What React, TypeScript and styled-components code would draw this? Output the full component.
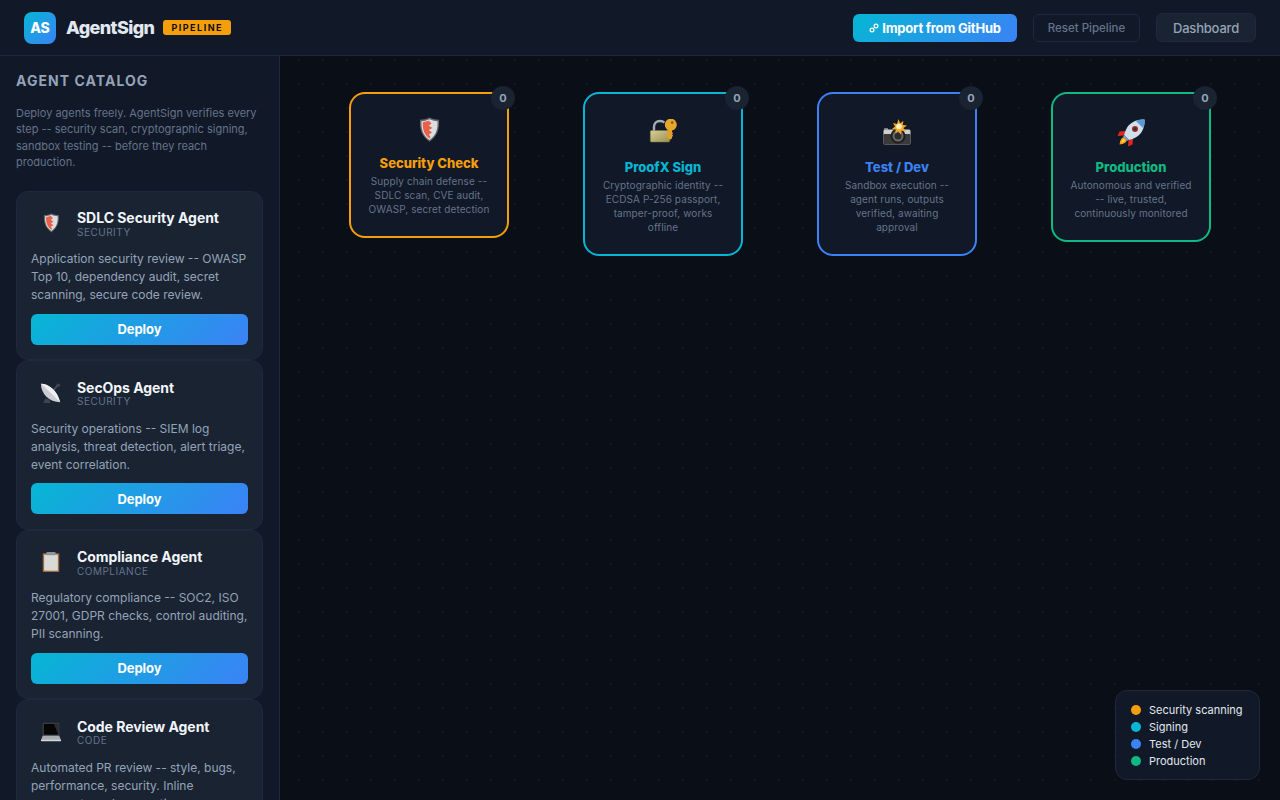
import * as React from "react";
import styled, { createGlobalStyle } from "styled-components";

const GlobalStyle = createGlobalStyle`
  html, body {
    margin: 0;
    height: 100%;
    overflow: hidden;
    background: #0a0e17;
    font-family: Inter, "Liberation Sans", sans-serif;
    -webkit-font-smoothing: antialiased;
  }
  #root {
    height: 100%;
  }
  * {
    box-sizing: border-box;
  }
`;

const Page = styled.div`
  height: 100vh;
  display: flex;
  flex-direction: column;
`;

const Header = styled.header`
  height: 56px;
  flex-shrink: 0;
  display: flex;
  align-items: center;
  justify-content: space-between;
  padding: 0 24px;
  background: #111827;
  border-bottom: 1px solid #1e293b;
`;

const Brand = styled.div`
  display: flex;
  align-items: center;
`;

const LogoMark = styled.div`
  width: 32px;
  height: 32px;
  border-radius: 8px;
  background: linear-gradient(135deg, #06b6d4, #3b82f6);
  color: #fff;
  font-size: 14px;
  font-weight: 800;
  display: flex;
  align-items: center;
  justify-content: center;
  margin-right: 10px;
`;

const BrandName = styled.span`
  font-size: 18px;
  font-weight: 800;
  color: #e2e8f0;
  letter-spacing: -0.6px;
  margin-right: 9px;
`;

const PipelineTag = styled.span`
  height: 15px;
  padding: 0 8px;
  border-radius: 3px;
  background: #f59e0b;
  color: #0a0e17;
  font-size: 9px;
  font-weight: 700;
  letter-spacing: 1.5px;
  line-height: 15px;
  margin-top: -1px;
`;

const Actions = styled.div`
  display: flex;
  align-items: center;
  gap: 16px;
`;

const ImportButton = styled.button`
  width: 164px;
  height: 28px;
  border: 0;
  border-radius: 6px;
  background: linear-gradient(135deg, #06b6d4, #3b82f6);
  color: #fff;
  font: 700 13px Inter, sans-serif;
  letter-spacing: -0.2px;
  display: flex;
  align-items: center;
  justify-content: center;
  gap: 3px;
  padding: 0;
`;

const ResetButton = styled.button`
  width: 107px;
  height: 28px;
  border: 1px solid #1e293b;
  border-radius: 6px;
  background: transparent;
  color: #64748b;
  font: 500 11.5px Inter, sans-serif;
  padding: 0;
`;

const DashboardButton = styled.button`
  width: 100px;
  height: 29px;
  border: 1px solid #1e293b;
  border-radius: 6px;
  background: #1a2332;
  color: #94a3b8;
  font: 500 13px Inter, sans-serif;
  letter-spacing: -0.2px;
  padding: 0;
`;

const Body = styled.div`
  flex: 1;
  min-height: 0;
  display: flex;
`;

const Sidebar = styled.aside`
  width: 280px;
  flex-shrink: 0;
  overflow: hidden;
  padding: 16px;
  background: #111827;
  border-right: 1px solid #1e293b;
`;

const SidebarTitle = styled.h2`
  margin: 0 0 15.9px;
  font-size: 14px;
  line-height: 17px;
  font-weight: 700;
  letter-spacing: 1.05px;
  color: #94a3b8;
`;

const SidebarIntro = styled.p`
  margin: 0 0 20.1px;
  font-size: 11px;
  line-height: 16.5px;
  color: #64748b;
`;

const AgentCard = styled.article`
  width: 247px;
  padding: 14px 14px 14.7px;
  background: #1a2332;
  border: 1px solid #1e293b;
  border-radius: 12px;
`;

const AgentHead = styled.div`
  height: 35.1px;
  display: flex;
  align-items: center;
  margin-bottom: 9.1px;
`;

const AgentIcon = styled.div`
  width: 40px;
  display: flex;
  justify-content: center;
  margin-right: 6px;
`;

const AgentName = styled.div`
  font-size: 14px;
  line-height: 17px;
  font-weight: 700;
  letter-spacing: -0.05px;
  color: #f1f5f9;
`;

const AgentCategory = styled.div`
  margin-top: -0.4px;
  font-size: 10px;
  line-height: 12px;
  letter-spacing: 0.5px;
  color: #64748b;
`;

const AgentText = styled.p`
  margin: 0 0 9.6px;
  font-size: 12px;
  line-height: 18px;
  color: #94a3b8;
`;

const DeployButton = styled.button`
  width: 100%;
  height: 31px;
  border: 0;
  border-radius: 6px;
  background: linear-gradient(135deg, #06b6d4, #3b82f6);
  color: #fff;
  font: 700 13px Inter, sans-serif;
  letter-spacing: -0.1px;
  padding: 0;
`;

const Canvas = styled.main`
  flex: 1;
  min-width: 0;
  position: relative;
  display: flex;
  justify-content: center;
  align-items: flex-start;
  gap: 74px;
  padding-top: 36px;
  background-color: #0a0e17;
  background-image: radial-gradient(circle, #111824 1px, transparent 1px);
  background-size: 24px 24px;
  background-position: 7px -8px;
`;

const StageCard = styled.section<{ $color: string }>`
  position: relative;
  width: 160px;
  padding: 20px 16px;
  background: #111827;
  border: 2px solid ${p => p.$color};
  border-radius: 16px;
  text-align: center;
`;

const CountBadge = styled.span`
  position: absolute;
  top: -8px;
  right: -8px;
  width: 24px;
  height: 24px;
  border-radius: 50%;
  background: #1a2332;
  color: #94a3b8;
  font-size: 11px;
  font-weight: 700;
  line-height: 24px;
`;

const StageIcon = styled.div<{ $height: number }>`
  height: ${p => p.$height}px;
  display: flex;
  justify-content: center;
  align-items: center;
  margin-bottom: 8px;
`;

const StageTitle = styled.h3<{ $color: string }>`
  margin: 0 -8px 3px;
  font-size: 13px;
  line-height: 16px;
  font-weight: 800;
  color: ${p => p.$color};
`;

const StageText = styled.p`
  margin: 0;
  font-size: 10px;
  line-height: 14px;
  letter-spacing: 0.1px;
  color: #64748b;
`;

const Legend = styled.div`
  position: absolute;
  right: 20px;
  bottom: 20px;
  width: 145px;
  padding: 13px 15px 11px;
  display: flex;
  flex-direction: column;
  gap: 4px;
  background: #111827;
  border: 1px solid #1e293b;
  border-radius: 12px;
`;

const LegendRow = styled.div`
  display: flex;
  align-items: center;
  gap: 8px;
  font-size: 11px;
  line-height: 13px;
  color: #e2e8f0;
`;

const LegendDot = styled.span<{ $color: string }>`
  width: 10px;
  height: 10px;
  border-radius: 50%;
  background: ${p => p.$color};
  position: relative;
  top: -0.5px;
`;

const LinkIcon = () => (
  <svg width="10" height="10" viewBox="0 0 10 10" fill="none" stroke="#fff" strokeWidth="1.2">
    <circle cx="3" cy="7" r="1.9" />
    <circle cx="7" cy="3" r="1.9" />
  </svg>
);

const ShieldEmoji = ({ size }: { size: number }) => (
  <svg width={size} height={size} viewBox="0 0 28 28">
    <path d="M14.5 0.5c3.400 1.600 6.400 2.200 9.500 2.200.6 9.300-1.600 16.500-9.500 22-7.900-5.500-10.100-12.700-9.500-22 3.100 0 6.100-.6 9.500-2.200z" fill="#63676b" />
    <path d="M14.5 2.300c3 1.300 5.500 1.800 8 1.900.4 8.100-1.400 14.200-8 18.700-6.600-4.500-8.400-10.600-8-18.700 2.500-.1 5-.6 8-1.900z" fill="#dcdddf" />
    <path d="M7.800 5.200l6.200-1.400 2.500 3-2.700 1.700 3.500 2.500-3.500 2 3.200 2.500-3.200 2 1.700 2.500-1 1.400C9 17.500 7.500 12.500 7.800 5.200z" fill="#e8604a" />
  </svg>
);

const LockEmoji = ({ size }: { size: number }) => (
  <svg width={size} height={size} viewBox="0 0 28 28">
    <defs>
      <linearGradient id="lockBody" x1="0" y1="0" x2="1" y2="1">
        <stop offset="0" stopColor="#d6d09a" />
        <stop offset="1" stopColor="#9c8f4e" />
      </linearGradient>
    </defs>
    <g transform="translate(0 -1)">
      <path d="M5 13V9C5 5.500 7.500 3 11 3c1.800 0 3.300.6 4.400 1.700" fill="none" stroke="#a4acb5" strokeWidth="2.400" />
      <rect x="1.300" y="12.500" width="19.400" height="11.500" rx="1.200" fill="url(#lockBody)" stroke="#7f7440" strokeWidth=".5" />
      <path d="M18.500 11h4.500v3l1.200 1.200-1.200 1.200 1.200 1.300-1.200 1.200v1.300l-1.700 1.500-2.800-2z" fill="#e0a126" />
      <circle cx="21.800" cy="6.700" r="6" fill="#e5a82a" />
      <circle cx="23.200" cy="4.600" r="1.300" fill="#7d5d16" />
    </g>
  </svg>
);

const CameraEmoji = ({ size }: { size: number }) => (
  <svg width={size} height={size} viewBox="0 0 28 28">
    <rect x="1" y="9" width="4" height="2" fill="#777" />
    <rect x=".5" y="10.500" width="27" height="15" rx="1.500" fill="#cfcfcf" />
    <rect x=".5" y="15" width="27" height="10.500" rx="1" fill="#3a3a3a" />
    <circle cx="15" cy="17" r="7.500" fill="#1f1f1f" />
    <circle cx="15" cy="17" r="5.500" fill="#6a6a6a" />
    <circle cx="15" cy="17" r="3.500" fill="#2c2c2c" />
    <path d="M15.500 0l1.600 4.200L20.500 2l-.8 4 4.300.5-3.500 2.500 2.500 3.500-4.300-.7-1 3.700-2.400-3.200-3 2.200.4-3.900-3.700-.6 3-2.500-2-3.500 4 1z" fill="#f9a825" />
    <circle cx="16" cy="7.500" r="2.800" fill="#fff3c4" />
  </svg>
);

const RocketEmoji = ({ size }: { size: number }) => (
  <svg width={size} height={size} viewBox="0 0 28 28">
    <path d="M9 12L2.500 12.500.5 17l6-.5z" fill="#e2261c" />
    <path d="M16 19l-.5 6.500-4.500 2 .5-6z" fill="#e2261c" />
    <path d="M7 18c-2.500.5-4 3-4.500 7.500C7 25 9.500 23.500 10 21z" fill="#f7a11b" />
    <path d="M6.500 20c-1 .5-1.800 2-2 3.500 1.500-.2 3-1 3.500-2z" fill="#ffe45c" />
    <path d="M27.500.5c-6-.5-12 1.500-16 6C9.500 9 8 12.500 7 16l5 5c3.500-1 7-2.500 9.500-4.500 4.500-4 6.500-10 6-16z" fill="#cfe0ec" />
    <path d="M27.500.5c-3-.3-6 .2-8.800 1.300l7.500 7.500C27.300 6.500 27.800 3.500 27.500.5z" fill="#5b9bd5" />
    <circle cx="18" cy="10" r="3" fill="#b3261e" />
    <circle cx="18" cy="10" r="1.700" fill="#31373d" />
    <path d="M7 16l5 5-1.500.8-4.300-4.300z" fill="#7fa8c9" />
  </svg>
);

const SatelliteEmoji = ({ size }: { size: number }) => (
  <svg width={size} height={size} viewBox="0 0 24 24">
    <path d="M6 18l-2.500 5h8l-1.500-4z" fill="#3f4650" />
    <path d="M12 12l7-8" stroke="#4a5058" strokeWidth="2" fill="none" />
    <circle cx="20" cy="3.500" r="2" fill="#3f4650" />
    <path d="M1 2C10 2 19 10 22 22 10 22 1 13 1 2z" fill="#c9ccd0" />
    <path d="M1 2c9 0 18 8 21 20C14 14 8 8 1 2z" fill="#eceef0" />
  </svg>
);

const ClipboardEmoji = ({ size }: { size: number }) => (
  <svg width={size} height={size} viewBox="0 0 24 24">
    <rect x="3" y="2.500" width="18" height="20.500" rx="1" fill="#9c6b3c" />
    <rect x="4.500" y="4" width="15" height="17.500" fill="#d9d9d6" />
    <rect x="7" y="1" width="10" height="3.500" rx="1" fill="#8f9296" />
  </svg>
);

const LaptopEmoji = ({ size }: { size: number }) => (
  <svg width={size} height={size} viewBox="0 0 24 24">
    <rect x="3" y="2" width="18" height="14" rx="1" fill="#4a4d52" />
    <path d="M4 3h16v12H4z" fill="#060606" />
    <path d="M15 3h5v12z" fill="#2a2c30" />
    <path d="M3 16h18l2 5H1z" fill="#a9acaf" />
    <rect x="1" y="20.500" width="22" height="1.500" rx=".5" fill="#d5d6d8" />
  </svg>
);

const stages = [
  {
    title: "Security Check",
    color: "#f59e0b",
    Icon: ShieldEmoji,
    iconHeight: 33,
    text: "Supply chain defense -- SDLC scan, CVE audit, OWASP, secret detection"
  },
  {
    title: "ProofX Sign",
    color: "#06b6d4",
    Icon: LockEmoji,
    iconHeight: 37,
    text: "Cryptographic identity -- ECDSA P-256 passport, tamper-proof, works offline"
  },
  {
    title: "Test / Dev",
    color: "#3b82f6",
    Icon: CameraEmoji,
    iconHeight: 37,
    text: "Sandbox execution -- agent runs, outputs verified, awaiting approval"
  },
  {
    title: "Production",
    color: "#10b981",
    Icon: RocketEmoji,
    iconHeight: 37,
    text: "Autonomous and verified -- live, trusted, continuously monitored"
  }
];

const agents = [
  {
    name: "SDLC Security Agent",
    category: "SECURITY",
    Icon: ShieldEmoji,
    text: "Application security review -- OWASP Top 10, dependency audit, secret scanning, secure code review."
  },
  {
    name: "SecOps Agent",
    category: "SECURITY",
    Icon: SatelliteEmoji,
    text: "Security operations -- SIEM log analysis, threat detection, alert triage, event correlation."
  },
  {
    name: "Compliance Agent",
    category: "COMPLIANCE",
    Icon: ClipboardEmoji,
    text: "Regulatory compliance -- SOC2, ISO 27001, GDPR checks, control auditing, PII scanning."
  },
  {
    name: "Code Review Agent",
    category: "CODE",
    Icon: LaptopEmoji,
    text: "Automated PR review -- style, bugs, performance, security. Inline comments and suggestions."
  }
];

const legend = [
  { label: "Security scanning", color: "#f59e0b" },
  { label: "Signing", color: "#06b6d4" },
  { label: "Test / Dev", color: "#3b82f6" },
  { label: "Production", color: "#10b981" }
];

const App = () => (
  <Page>
    <GlobalStyle />
    <Header>
      <Brand>
        <LogoMark>AS</LogoMark>
        <BrandName>AgentSign</BrandName>
        <PipelineTag>PIPELINE</PipelineTag>
      </Brand>
      <Actions>
        <ImportButton>
          <LinkIcon />
          Import from GitHub
        </ImportButton>
        <ResetButton>Reset Pipeline</ResetButton>
        <DashboardButton>Dashboard</DashboardButton>
      </Actions>
    </Header>
    <Body>
      <Sidebar>
        <SidebarTitle>AGENT CATALOG</SidebarTitle>
        <SidebarIntro>
          Deploy agents freely. AgentSign verifies every step -- security scan, cryptographic
          signing, sandbox testing -- before they reach production.
        </SidebarIntro>
        {agents.map(agent => (
          <AgentCard key={agent.name}>
            <AgentHead>
              <AgentIcon>
                <agent.Icon size={22} />
              </AgentIcon>
              <div>
                <AgentName>{agent.name}</AgentName>
                <AgentCategory>{agent.category}</AgentCategory>
              </div>
            </AgentHead>
            <AgentText>{agent.text}</AgentText>
            <DeployButton>Deploy</DeployButton>
          </AgentCard>
        ))}
      </Sidebar>
      <Canvas>
        {stages.map(stage => (
          <StageCard key={stage.title} $color={stage.color}>
            <CountBadge>0</CountBadge>
            <StageIcon $height={stage.iconHeight}>
              <stage.Icon size={28} />
            </StageIcon>
            <StageTitle $color={stage.color}>{stage.title}</StageTitle>
            <StageText>{stage.text}</StageText>
          </StageCard>
        ))}
        <Legend>
          {legend.map(item => (
            <LegendRow key={item.label}>
              <LegendDot $color={item.color} />
              {item.label}
            </LegendRow>
          ))}
        </Legend>
      </Canvas>
    </Body>
  </Page>
);

export default App;
